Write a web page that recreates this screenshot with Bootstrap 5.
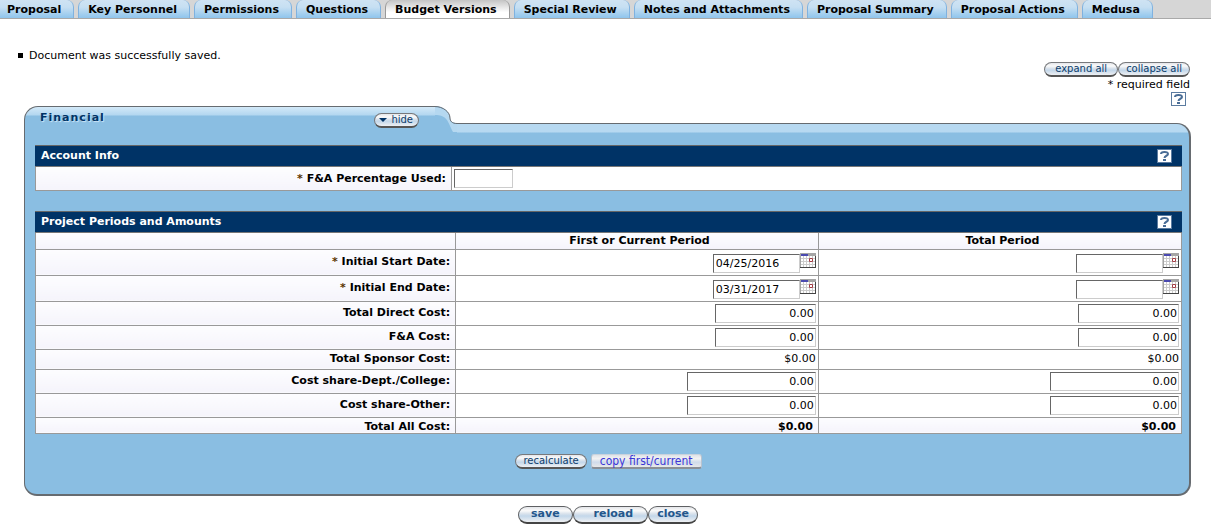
<!DOCTYPE html>
<html lang="en">
<head>
<meta charset="utf-8">
<meta name="viewport" content="width=device-width, initial-scale=1">
<title>Budget Versions</title>
<link href="https://cdn.jsdelivr.net/npm/bootstrap@5.3.0/dist/css/bootstrap.min.css" rel="stylesheet">
<style>
body{font-family:"DejaVu Sans",Verdana,sans-serif;font-size:11px;line-height:14px;color:#000;background:#fff}
.doc-tabs{background:#d6d6d6;border-bottom:1px solid #a9a9a9;gap:4px;height:19px;overflow:hidden}
.doc-tabs .nav-link{height:18px;padding:3px 12px 0 9px;line-height:14px;font-weight:700;color:#000;white-space:nowrap;border:solid #7fb2e0;border-width:0 1px;border-radius:7px 7px 0 0;background:linear-gradient(#cfe3f3,#c6dff2 40%,#8fc5ed)}
.doc-tabs li:first-child .nav-link{padding-left:7px;border-left:0;border-top-left-radius:0}
.doc-tabs .nav-link.active{height:19px;color:#000;border-color:#999;background:linear-gradient(#c4c4c4,#fff 65%)}
.doc-tabs li.current{margin-bottom:-1px}
.notice{margin:30px 0 0 18px;padding:0;list-style:none;line-height:13px}
.notice li{display:flex;align-items:center;gap:6px}
.notice li::before{content:"";width:5px;height:5px;background:#000}
.tools{padding-right:21px}
.req-note{padding-top:1px}
.pill{display:inline-flex;align-items:center;justify-content:center;height:15px;padding:0 10px;border:1px solid #77797c;border-bottom:2px solid #555;border-radius:8px;background:linear-gradient(#e4e6ea,#fafafa 25%,#d9e2ec 45%,#c3d7ea 60%,#eef0f3);color:#0d3d6b;font-size:10px;line-height:12px;white-space:nowrap}
.pill-tight{padding:0 7px}
.pill-hide{padding:0 5px 0 4px;gap:4px;margin-top:3px}
.pill-lg{height:18px;padding:0 12px;border-radius:9px;color:#23578c;font-size:11px;font-weight:700;border-color:#5e6063;border-bottom-color:#444}
.pill-wide{padding:0 14px 0 20px}
.pill-close{padding:0 8px}
.pill-copy{padding:0 8px;border-radius:3px;border-color:#c9d3dd #b9c3cf #8a8f96;background:linear-gradient(#dfe3e8,#f2f2f2 30%,#d0dceb 60%,#e8e8e8);color:#3b35d6;font-family:"DejaVu Sans Condensed","DejaVu Sans",sans-serif;font-size:12px}
.help{display:block;width:15px;height:14px;padding:0;border:1px solid #5b7ba0;background:#fff;color:#4a6d96;font-weight:700;font-size:12px;line-height:12px;text-align:center}
.help svg{display:block;margin:auto}
.panel-area{margin:0 20px 0 24px}
.panel-head{height:39px}
.head-tab{width:411px;border:solid #666b70;border-width:1px 0 0 1px;border-radius:14px 0 0 0;background:linear-gradient(#d3e9f8,#b3d7f0 8px,#8abee2 9px);padding:3px 16px 0 15px}
.head-tab h1{font-size:11px;line-height:16px;font-weight:700;letter-spacing:1px;color:#036;text-shadow:1px 1px 1px #d0e6f6;margin:0}
.head-rest{margin-top:17px;border:solid #666b70;border-width:1px 2px 0 0;border-radius:0 14px 0 0;background:linear-gradient(#b7d9f1 8px,#8abee2 9px)}
.panel-body{border:solid #666b70;border-width:0 2px 2px 1px;border-radius:0 0 13px 13px;background:#8abee2;padding:0 7px 25px 10px}
.bar{height:22px;background:#036;border-top:1px solid #666;border-bottom:1px solid #777;padding:0 10px 0 6px;color:#fff}
.bar h2{font-size:11px;line-height:14px;font-weight:700;margin:0}
.section-gap{margin-top:20px}
.grid{width:100%;table-layout:fixed;border-collapse:collapse;margin:0;background:#fff}
.grid th,.grid td{border:1px solid #999;padding:2px;text-align:right;line-height:14px}
.grid th{background:linear-gradient(#fdfdff,#f5f4fb);padding-right:5px;font-weight:700}
.grid tr.first>*{border-top:0}
.grid thead th{text-align:center;padding:1px 0 0 5px;height:16px}
.grid .sum>*{padding-top:2px;padding-bottom:0;line-height:13px}
.grid .plain{height:20px}
.grid i{font-style:normal;color:#5a3300}
.box{height:19px;border:1px solid #ccc;border-top-color:#666;border-left-color:#666;border-radius:0;background:#fff;padding:1px 1px 0 2px;color:#000;font-size:11px;line-height:14px;display:block}
.w-pct{width:59px}.w-date{width:87px;margin-top:2px}.w-amt{width:101px}.w-share{width:129px}
.amt{text-align:right}
.cal{border:0;padding:0;margin-top:1px;background:none;display:block;width:16px;height:15px}
.cal svg,.curve{display:block}
.page-actions{margin-top:10px;padding-left:5px}
</style>
</head>
<body>
<svg width="0" height="0" class="position-absolute" aria-hidden="true"><symbol id="cal" viewBox="0 0 16 15">
<path fill="#fff" d="M0 0h16v15H0z"/><path fill="#ccc" d="M3 3h1v11H3zM6 3h1v11H6zM9 3h1v11H9zM12 3h1v11h-1zM1 5h14v1H1zM1 8h14v1H1zM1 11h14v1H1z"/>
<path fill="#a5a5a5" d="M0 0h16v3H0zM0 0h1v15H0z"/><path fill="#4a4ab0" d="M1 1h7v2H1z"/><path fill="#444" d="M15 3h1v12h-1zM0 14h16v1H0z"/><path fill="#fff" stroke="#a33d45" d="M9.500 5.500h3v3h-3z"/></symbol>
<symbol id="help" viewBox="0 0 13 12"><path fill="none" stroke="#4a6d96" stroke-width="2" d="M3 4C3 1.500 10 1 10 4C10 6 6.500 5.500 6.500 8"/><path fill="#4a6d96" d="M5 9h3v2H5z"/></symbol></svg>

<ul class="nav doc-tabs flex-nowrap">
<li><a class="nav-link" href="#">Proposal</a></li>
<li><a class="nav-link" href="#">Key Personnel</a></li>
<li><a class="nav-link" href="#">Permissions</a></li>
<li><a class="nav-link" href="#">Questions</a></li>
<li class="current"><a class="nav-link active" aria-current="page" href="#">Budget Versions</a></li>
<li><a class="nav-link" href="#">Special Review</a></li>
<li><a class="nav-link" href="#">Notes and Attachments</a></li>
<li><a class="nav-link" href="#">Proposal Summary</a></li>
<li><a class="nav-link" href="#">Proposal Actions</a></li>
<li><a class="nav-link" href="#">Medusa</a></li>
</ul>

<ul class="notice"><li>Document was successfully saved.</li></ul>

<div class="tools d-flex flex-column align-items-end">
<div class="d-flex"><button class="pill" type="button">expand all</button><button class="pill pill-tight" type="button">collapse all</button></div>
<div class="req-note">* required field</div>
<button class="help me-1" type="button" aria-label="Help"><svg width="13" height="12"><use href="#help"/></svg></button>
</div>

<main class="panel-area">
<div class="panel-head d-flex">
<div class="head-tab d-flex justify-content-between align-items-start"><h1>Financial</h1><button class="pill pill-hide" type="button"><svg width="8" height="5" aria-hidden="true"><path d="M0 0h8L4 4z" fill="#036"/></svg>hide</button></div>
<svg class="curve" width="22" height="39" aria-hidden="true"><path fill="#8abee2" d="M0 0C8 0 15 6 15 12C15 15 17 17 22 17V39H0z"/><path fill="#b5d8f0" d="M0 1C8 1 15 6 15 12C15 15 17 18 22 18V26H18C16 23 15 19 12 14C9 10 5 9 0 9z"/><path fill="none" stroke="#666b70" d="M0 .5C8 .5 15 6 15 12C15 15 17 17.500 22 17.500"/></svg>
<div class="head-rest flex-fill"></div>
</div>
<div class="panel-body">
<div class="bar d-flex justify-content-between align-items-center"><h2>Account Info</h2><button class="help" type="button" aria-label="Help on account info"><svg width="13" height="12"><use href="#help"/></svg></button></div>
<table class="grid"><colgroup><col style="width:36.300%"><col></colgroup>
<tr class="first"><th scope="row"><label for="pct"><i>*</i> F&amp;A Percentage Used:</label></th><td><input class="box w-pct" id="pct" type="text"></td></tr></table>

<div class="bar section-gap d-flex justify-content-between align-items-center"><h2>Project Periods and Amounts</h2><button class="help" type="button" aria-label="Help on project periods"><svg width="13" height="12"><use href="#help"/></svg></button></div>
<table class="grid"><colgroup><col style="width:36.660%"><col style="width:31.650%"><col></colgroup>
<thead><tr class="first"><th></th><th scope="col">First or Current Period</th><th scope="col">Total Period</th></tr></thead>
<tbody>
<tr><th scope="row"><label for="s1"><i>*</i> Initial Start Date:</label></th><td><div class="d-flex justify-content-end"><input class="box w-date" id="s1" value="04/25/2016"><button class="cal" type="button" aria-label="Pick date"><svg width="16" height="15"><use href="#cal"/></svg></button></div></td><td><div class="d-flex justify-content-end"><input class="box w-date" aria-label="Total start date"><button class="cal" type="button" aria-label="Pick date"><svg width="16" height="15"><use href="#cal"/></svg></button></div></td></tr>
<tr><th scope="row"><label for="e1"><i>*</i> Initial End Date:</label></th><td><div class="d-flex justify-content-end"><input class="box w-date" id="e1" value="03/31/2017"><button class="cal" type="button" aria-label="Pick date"><svg width="16" height="15"><use href="#cal"/></svg></button></div></td><td><div class="d-flex justify-content-end"><input class="box w-date" aria-label="Total end date"><button class="cal" type="button" aria-label="Pick date"><svg width="16" height="15"><use href="#cal"/></svg></button></div></td></tr>
<tr><th scope="row"><label for="d1">Total Direct Cost:</label></th><td><input class="box amt w-amt ms-auto" id="d1" value="0.00"></td><td><input class="box amt w-amt ms-auto" aria-label="Total direct cost, total period" value="0.00"></td></tr>
<tr><th scope="row"><label for="f1">F&amp;A Cost:</label></th><td><input class="box amt w-amt ms-auto" id="f1" value="0.00"></td><td><input class="box amt w-amt ms-auto" aria-label="F&amp;A cost, total period" value="0.00"></td></tr>
<tr><th class="plain" scope="row">Total Sponsor Cost:</th><td>$0.00</td><td>$0.00</td></tr>
<tr><th scope="row"><label for="c1">Cost share-Dept./College:</label></th><td><input class="box amt w-share ms-auto" id="c1" value="0.00"></td><td><input class="box amt w-share ms-auto" aria-label="Cost share department, total period" value="0.00"></td></tr>
<tr><th scope="row"><label for="o1">Cost share-Other:</label></th><td><input class="box amt w-share ms-auto" id="o1" value="0.00"></td><td><input class="box amt w-share ms-auto" aria-label="Cost share other, total period" value="0.00"></td></tr>
<tr class="sum"><th scope="row">Total All Cost:</th><th>$0.00</th><th>$0.00</th></tr>
</tbody></table>
<div class="section-gap d-flex justify-content-center gap-1"><button class="pill pill-tight" type="button">recalculate</button><button class="pill pill-copy" type="button">copy first/current</button></div>
</div>
</main>
<div class="page-actions d-flex justify-content-center"><button class="pill pill-lg" type="button">save</button><button class="pill pill-lg pill-wide" type="button">reload</button><button class="pill pill-lg pill-close" type="button">close</button></div>
<script src="https://cdn.jsdelivr.net/npm/bootstrap@5.3.0/dist/js/bootstrap.bundle.min.js"></script>
</body>
</html>
